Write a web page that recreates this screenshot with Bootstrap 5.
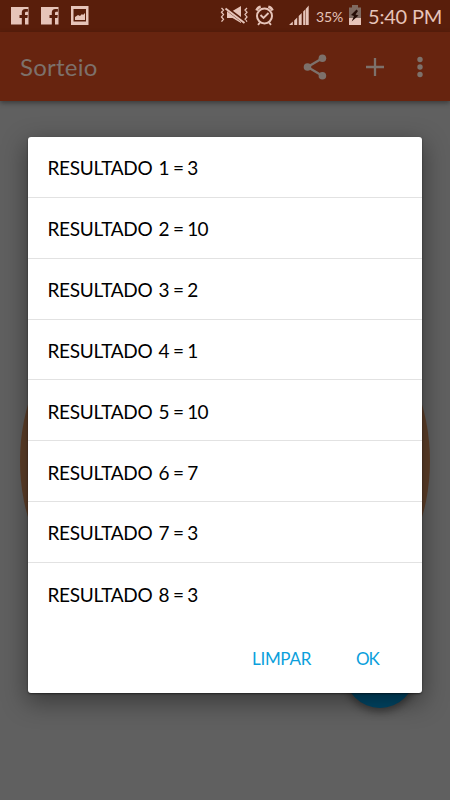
<!DOCTYPE html>
<html lang="pt-BR">
<head>
<meta charset="utf-8">
<meta name="viewport" content="width=device-width, initial-scale=1">
<title>Sorteio</title>
<link href="https://cdn.jsdelivr.net/npm/bootstrap@5.3.0/dist/css/bootstrap.min.css" rel="stylesheet">
<style>
body{font-family:Lato,"Open Sans",sans-serif;background:#606060;width:450px;height:800px;overflow:hidden}
.status-strip{height:32px;background:#591e0b;color:#e6c4b9;padding:0 8px 0 11px}
.status-strip svg,.app-bar svg{display:block;flex:none}
.battery-text{font-size:14px;width:28px;letter-spacing:-.1px;white-space:nowrap;margin-left:-5px}
.clock{font-size:20px;width:74px;white-space:nowrap;letter-spacing:-.2px}
.app-bar{height:69px;background:#67240f;color:#7d716b;padding:0 20px;box-shadow:0 2px 5px rgba(0,0,0,.4)}
.app-title{font-size:24px;letter-spacing:.25px;line-height:1;padding-top:1px}
.wheel{left:20px;top:256px;width:410px;height:410px;background:#5f402a}
.fab{left:345px;top:638px;width:70px;height:70px;background:#004767;box-shadow:0 4px 9px rgba(0,0,0,.4)}
.dialog-box{left:28px;top:137px;width:394px;height:556px;background:#fff;border-radius:3px;box-shadow:0 8px 24px 2px rgba(0,0,0,.38),0 1px 2px rgba(0,0,0,.5)}
.result-row{height:60.85px;padding:2px 20px 0;border:0;border-bottom:1px solid #e2e2e2;color:#000;font-size:19px;line-height:1;background:transparent;white-space:nowrap}
.result-row:last-child{border-bottom-color:transparent}
.result-name{width:111px;letter-spacing:-.3px;margin-left:-.5px}
.result-value{letter-spacing:-.75px}
.dialog-actions{height:70px;padding:0 12px}
.action{color:#0b9fdc;font-size:17px;line-height:1;letter-spacing:-.3px}
.action:first-child{width:104px}
.action:last-child{width:54px;letter-spacing:-1.2px}
</style>
</head>
<body class="position-relative m-0">
<header>
  <div class="status-strip d-flex align-items-center">
    <svg width="78" height="32" viewBox="0 0 78 32">
      <g fill="#e6c4b9">
        <path id="fb" d="M0 7h17.500v17.500H14v-6.500h2.400l.4-3H14v-2q0-1.300 1.300-1.300h1.600V9h-2.500Q10.800 9 10.800 12.500V15H8.500v3h2.300v6.500H0z"/>
        <use href="#fb" x="30"/>
        <path fill-rule="evenodd" d="M60 6h17.500v19H60zM62.500 9v12.500h12.500V9z"/>
        <path d="M64 20v-3l3-2 2 1 2-2 1 1 2-2v7z"/>
      </g>
    </svg>
    <svg class="ms-auto" width="102" height="32" viewBox="220 0 102 32">
      <g fill="none" stroke="#e6c4b9">
        <path stroke-width="1.300" d="M222.500 8l2 2-2 2.300 2 2.300-2 2.300 2 2.300-2 2.500M248 8l-2 2 2 2.300-2 2.300 2 2.300-2 2.300 2 2.500"/>
        <path fill="#e6c4b9" stroke="none" d="M228 11h5.500l8.500-5v17l-8.500-5H228z"/>
        <path stroke="#591e0b" stroke-width="4" d="M227 8l19 14.500"/>
        <path stroke-width="2" d="M226.500 8.500l19 14.500"/>
        <circle cx="265.500" cy="16" r="7.500" stroke-width="2"/>
        <path stroke-width="1.900" d="M261.500 15l3 3 5-5M261 22.500l-2 2.300M270 22.500l2 2.300"/>
        <path stroke-width="2.600" d="M257.500 10.500q1-3 4.200-3.700M273.500 10.500q-1-3-4.200-3.700"/>
      </g>
      <path fill="#e6c4b9" d="M290 25l3.800-3.500V25zM295.200 20.500l3-3V25h-3zM299.700 16l3-3V25h-3zM304.200 11.500l2-2V25h-2zM306.700 9l3-3.500V25h-3z"/>
    </svg>
    <span class="battery-text">35%</span>
    <svg width="24" height="32" viewBox="344 0 24 32">
      <path fill="#806a61" d="M349 7.500h3V5h6v2.500h3V18h-12z"/>
      <path fill="#e6c4b9" d="M349 18h12v7h-12z"/>
      <path fill="#260d06" d="M356.500 9.500l-5.500 5.500 3 1-2.300 5.500 6.800-6-3-1 2.500-3.500z"/>
    </svg>
    <span class="clock">5:40 PM</span>
  </div>
  <nav class="app-bar d-flex align-items-center position-relative">
    <span class="app-title">Sorteio</span>
    <svg class="ms-auto" width="130" height="40" viewBox="300 46 130 40">
      <g fill="#7d716b"><circle cx="322.400" cy="57.200" r="3.800"/><circle cx="307.500" cy="66" r="3.800"/><circle cx="322.400" cy="74.800" r="3.800"/>
      <circle cx="420" cy="58.500" r="2.700"/><circle cx="420" cy="66" r="2.700"/><circle cx="420" cy="73.500" r="2.700"/></g>
      <path fill="none" stroke="#7d716b" stroke-width="2.300" d="M322.400 57.200L307.500 66l14.900 8.800M366 66h18M375 57v18"/>
    </svg>
  </nav>
</header>
<div class="wheel position-absolute rounded-circle"></div>
<div class="fab position-absolute rounded-circle"></div>
<section class="dialog-box position-absolute d-flex flex-column" role="dialog" aria-label="Resultados">
  <div class="list-group list-group-flush">
    <div class="list-group-item result-row d-flex align-items-center"><span class="result-name">RESULTADO</span><span class="result-value">1 = 3</span></div>
    <div class="list-group-item result-row d-flex align-items-center"><span class="result-name">RESULTADO</span><span class="result-value">2 = 10</span></div>
    <div class="list-group-item result-row d-flex align-items-center"><span class="result-name">RESULTADO</span><span class="result-value">3 = 2</span></div>
    <div class="list-group-item result-row d-flex align-items-center"><span class="result-name">RESULTADO</span><span class="result-value">4 = 1</span></div>
    <div class="list-group-item result-row d-flex align-items-center"><span class="result-name">RESULTADO</span><span class="result-value">5 = 10</span></div>
    <div class="list-group-item result-row d-flex align-items-center"><span class="result-name">RESULTADO</span><span class="result-value">6 = 7</span></div>
    <div class="list-group-item result-row d-flex align-items-center"><span class="result-name">RESULTADO</span><span class="result-value">7 = 3</span></div>
    <div class="list-group-item result-row d-flex align-items-center"><span class="result-name">RESULTADO</span><span class="result-value">8 = 3</span></div>
  </div>
  <div class="dialog-actions d-flex justify-content-end align-items-center">
    <button class="action btn border-0 p-0 text-start">LIMPAR</button>
    <button class="action btn border-0 p-0 text-start">OK</button>
  </div>
</section>
<script src="https://cdn.jsdelivr.net/npm/bootstrap@5.3.0/dist/js/bootstrap.bundle.min.js"></script>
</body>
</html>
